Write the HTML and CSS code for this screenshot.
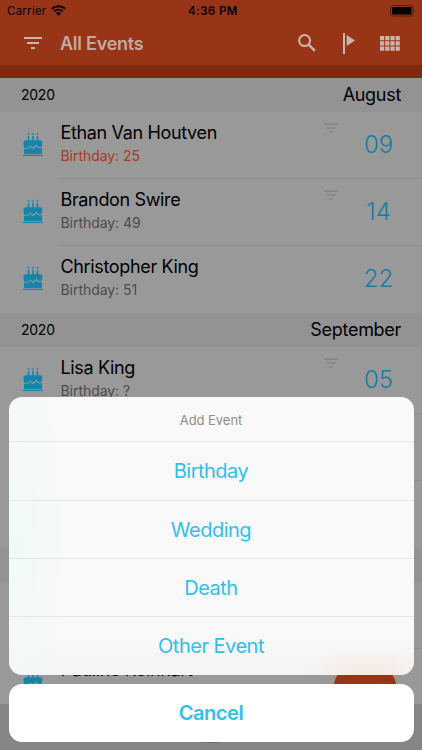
FILE: index.html
```html
<!DOCTYPE html>
<html lang="en">
<head>
<meta charset="utf-8">
<title>All Events</title>
<link rel="stylesheet" href="styles.css">
</head>
<body>
<svg class="defs" width="0" height="0">
  <symbol id="cake" viewBox="0 0 20 24">
    <path d="M4.700 4h1.600v5H4.700zM9.200 4h1.600v5H9.200zM13.700 4h1.600v5h-1.600zM5.500.6l1 1.400-1 1.200-1-1.200zM10 .6l1 1.400-1 1.200L9 2zM14.500.6l1 1.400-1 1.200-1-1.200z"/>
    <path d="M3 8.200h14q2.500 0 2.500 2.400 0 3-1.300 5-1.800.2-3.500-1.700l-1.500-1.100-3.200 3-2.600-2.300-2.400 2.400q-2 .9-3.800-.5Q.4 13.300.4 10.800.5 8.200 3 8.200z"/>
    <path d="M1 16.400q2.500 1.500 4.600.1l1.900-1.700 2.700 2.500 3.100-3.100q2.200 3.200 5.700 1.900v6H1zM0 22.700h20V24H0z"/>
  </symbol>
  <symbol id="filter" viewBox="0 0 18 12"><path d="M0 0h18v2H0zM3 5h12v2H3zM7 10h4v2H7z"/></symbol>
</svg>
<div class="app">
  <header class="header">
    <div class="status">
      <span class="carrier">Carrier</span>
      <svg class="wifi" width="15" height="11" viewBox="0 0 15 11"><path d="M.8 3.800a10 10 0 0 1 13.400 0M3.100 6.300a6.500 6.500 0 0 1 8.800 0" fill="none" stroke="#000" stroke-width="1.900"/><path d="M4.900 8a4 4 0 0 1 5.200 0L7.500 10.800z"/></svg>
      <span class="time">4:36 PM</span>
      <svg class="battery" width="27" height="12" viewBox="0 0 27 12"><rect x=".5" y=".5" width="22.500" height="10.500" rx="2.500" fill="none" stroke="#51200f"/><rect x="2" y="2" width="19.500" height="7.500" rx="1"/><path d="M24.300 4q1.700 1.700 0 3.500z" fill="#51200f"/></svg>
    </div>
    <div class="toolbar">
      <svg class="menu" width="18" height="12"><use href="#filter"/></svg>
      <h1>All Events</h1>
      <svg class="search" width="18" height="18" viewBox="0 0 18 18"><circle cx="6.600" cy="6.600" r="5.500" fill="none" stroke="currentColor" stroke-width="2"/><path d="M10.900 10.900L16.900 16.900" stroke="currentColor" stroke-width="2.500"/></svg>
      <svg class="flag" width="12" height="21" viewBox="0 0 12 21"><path d="M0 0h2v21H0zM3.700 2L12 7.500 3.700 13z"/></svg>
      <svg class="grid" width="20" height="15" viewBox="0 0 20 15"><path d="M0 0h4.200v4.200H0zM5.200 0h4.200v4.200H5.200zM10.400 0h4.200v4.200h-4.200zM15.600 0h4.200v4.200h-4.200zM0 5.300h4.200v4.200H0zM5.200 5.300h4.200v4.200H5.200zM10.400 5.300h4.200v4.200h-4.200zM15.600 5.300h4.200v4.200h-4.200zM0 10.600h4.200v4.200H0zM5.200 10.600h4.200v4.200H5.200zM10.400 10.600h4.200v4.200h-4.200zM15.600 10.600h4.200v4.200h-4.200z"/></svg>
    </div>
  </header>
  <main class="events">
    <div class="month"><span class="year">2020</span><span class="name">August</span></div>
    <div class="event"><svg class="cake"><use href="#cake"/></svg><div class="info"><div class="person">Ethan Van Houtven</div><div class="detail today">Birthday: 25</div></div><svg class="mark"><use href="#filter"/></svg><div class="day">09</div></div>
    <div class="event"><svg class="cake"><use href="#cake"/></svg><div class="info"><div class="person">Brandon Swire</div><div class="detail">Birthday: 49</div></div><svg class="mark"><use href="#filter"/></svg><div class="day">14</div></div>
    <div class="event last"><svg class="cake"><use href="#cake"/></svg><div class="info"><div class="person">Christopher King</div><div class="detail">Birthday: 51</div></div><div class="day">22</div></div>
    <div class="month"><span class="year">2020</span><span class="name">September</span></div>
    <div class="event"><svg class="cake"><use href="#cake"/></svg><div class="info"><div class="person">Lisa King</div><div class="detail">Birthday: ?</div></div><svg class="mark"><use href="#filter"/></svg><div class="day">05</div></div>
    <div class="event"></div>
    <div class="event last"></div>
    <div class="month"></div>
    <div class="event"></div>
    <div class="event last"><svg class="cake"><use href="#cake"/></svg><div class="info"><div class="person">Pauline Reinhart</div></div></div>
  </main>
  <div class="fab"></div>
  <footer class="tabs"><div class="knob"></div></footer>
  <div class="sheet">
    <div class="options">
      <div class="title">Add Event</div>
      <div class="option">Birthday</div>
      <div class="option">Wedding</div>
      <div class="option">Death</div>
      <div class="option">Other Event</div>
    </div>
    <div class="cancel">Cancel</div>
  </div>
</div>
</body>
</html>
```

FILE: styles.css
```css
* { box-sizing: border-box; }
body { margin: 0; font-family: Inter, "Liberation Sans", sans-serif; }
svg { display: block; flex: none; fill: currentColor; }
.defs { position: absolute; }
.app { position: relative; width: 422px; height: 750px; overflow: hidden; background: #999; color: #000; }
.header { height: 78px; background: #993517; border-bottom: 13px solid #80270f; }
.status { display: grid; grid-template-columns: 44px 1fr 1fr 36px; height: 22px; align-items: center; padding-left: 7px; position: relative; }
.carrier { font-size: 11.500px; letter-spacing: 0.250px; }
.wifi { margin-top: -1px; }
.time { position: absolute; left: 188px; top: 4px; font-size: 11.500px; line-height: 14px; font-weight: 600; letter-spacing: 0.400px; white-space: nowrap; }
.battery { grid-column: 4; margin-left: 4px; margin-top: -1px; }
.toolbar { display: flex; align-items: center; height: 42px; padding: 0 22px 0 24px; color: #c9b5ae; }
h1 { flex: 1; margin: 0 0 0 18px; font-size: 18px; font-weight: 600; letter-spacing: -0.250px; color: #c0aaa3; }
.flag { margin-left: 27px; }
.grid { margin-left: 25px; }
.month { display: flex; justify-content: space-between; align-items: center; height: 33.500px; padding: 0 21px; background: #939393; }
.month > span { margin-top: -1px; }
.year { font-size: 14px; letter-spacing: -0.250px; }
.name { font-size: 18px; letter-spacing: -0.300px; }
.event { position: relative; display: flex; height: 67.200px; }
.event:not(.last)::after { content: ""; position: absolute; left: 60px; right: 0; bottom: 0; height: 1px; background: #8c8c8c; }
.cake { width: 20px; height: 24px; margin: 20px 0 0 23px; color: #1685aa; }
.info { flex: 1; padding: 9.500px 0 0 17.500px; white-space: nowrap; }
.person { font-size: 18px; line-height: 24px; letter-spacing: -0.350px; }
.detail { font-size: 14px; line-height: 22px; letter-spacing: -0.050px; color: #4c4c4c; }
.today { color: #a9391b; }
.mark { width: 14px; height: 10px; margin: 11.500px 11.500px 0 0; color: #858585; }
.mark, .menu { overflow: visible; }
.day { width: 58px; margin-right: 14.500px; padding-top: 15.500px; text-align: center; font-size: 24px; line-height: 36px; font-weight: 350; letter-spacing: -0.100px; color: #167da2; }
.fab { position: absolute; left: 333px; top: 659px; width: 64px; height: 64px; border-radius: 50%; background: #993517; }
.tabs { position: absolute; left: 0; right: 0; bottom: 0; height: 46px; background: #858585; }
.knob { width: 46px; height: 10px; margin: 29px auto 0; border-radius: 50%; background: #6c6c6c; }
.sheet { position: absolute; left: 8.500px; right: 8.500px; top: 397px; display: flex; flex-direction: column; gap: 8.500px; text-align: center; color: #32bfee; }
.options { height: 278px; border-radius: 13px; overflow: hidden; background: radial-gradient(ellipse 65px 28px at 359px 278px, #f7e8e1, rgba(247, 232, 225, 0)), radial-gradient(ellipse 48px 250px at 10px 145px, #f0f9f9, rgba(240, 249, 249, 0)), linear-gradient(#f9f9f9 0 85%, #f4f4f4); }
.title { height: 44.300px; line-height: 46px; font-size: 13px; letter-spacing: -0.050px; color: #8e8e8e; }
.option { height: 58.350px; border-top: 1px solid #e5e8e9; line-height: 58.500px; font-size: 20px; letter-spacing: -0.500px; }
.cancel { height: 58px; border-radius: 13px; background: #fff; line-height: 59px; font-size: 20px; font-weight: 600; letter-spacing: -0.450px; }
```
